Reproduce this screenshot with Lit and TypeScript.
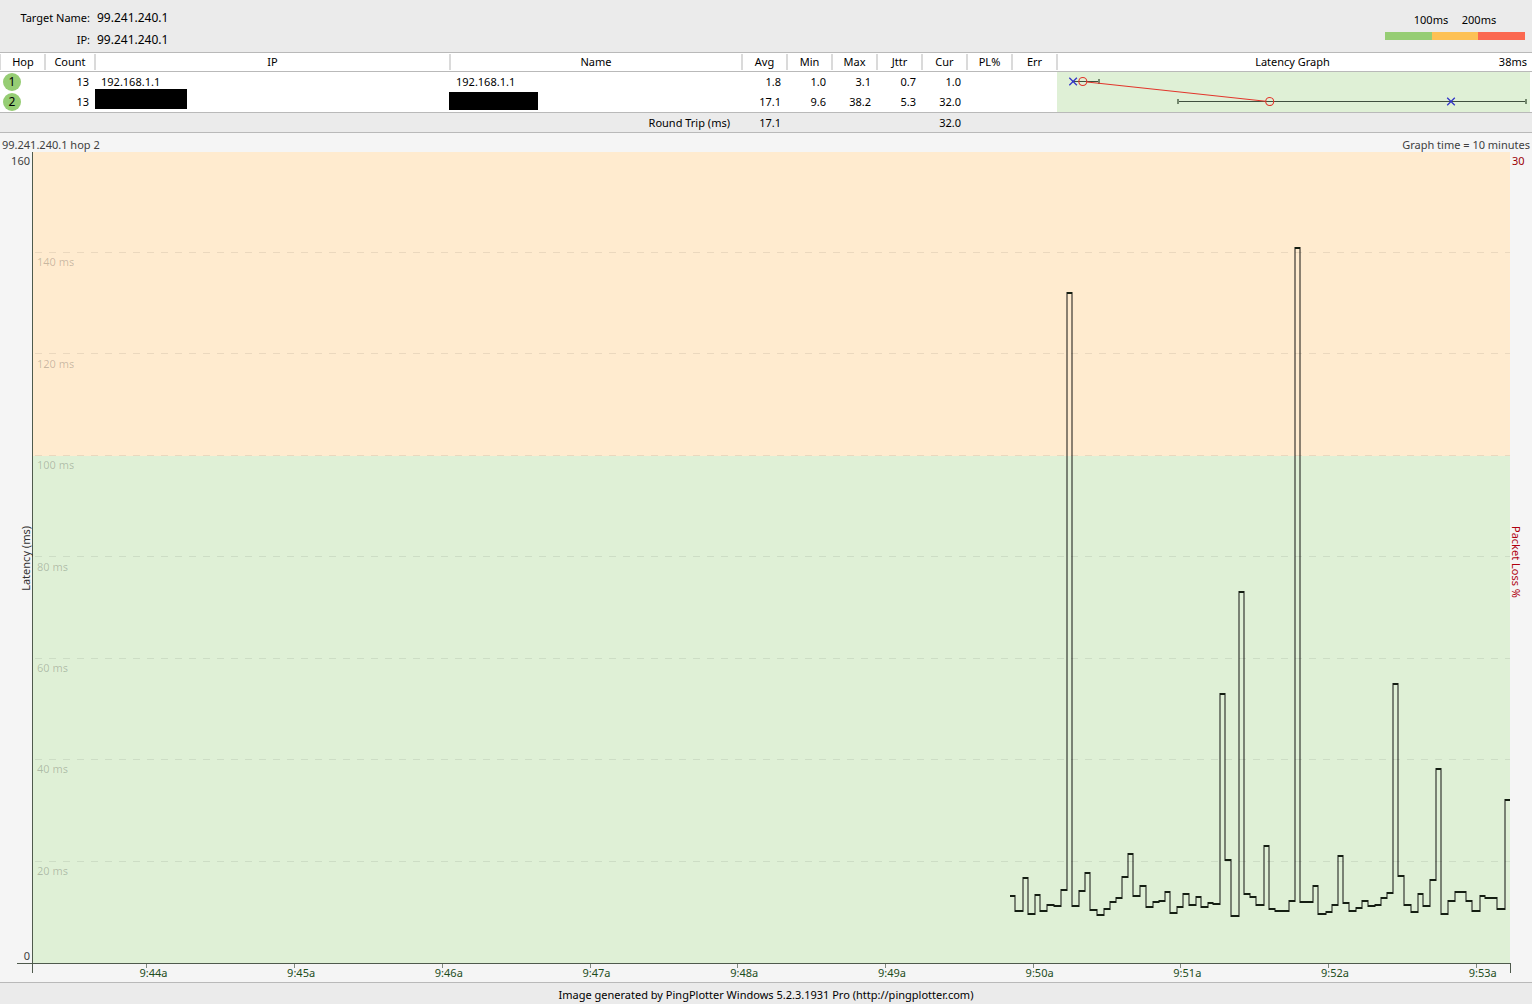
import { LitElement, html, svg, css } from "lit";
import { customElement } from "lit/decorators.js";

interface Hop {
  hop: number;
  count: number;
  ip: string;
  name: string;
  stats: string[];
}

const STAT_COLUMNS = ["Avg", "Min", "Max", "Jttr", "Cur", "PL%", "Err"];

const HOPS: Hop[] = [
  { hop: 1, count: 13, ip: "192.168.1.1", name: "192.168.1.1", stats: ["1.8", "1.0", "3.1", "0.7", "1.0", "", ""] },
  { hop: 2, count: 13, ip: "", name: "", stats: ["17.1", "9.6", "38.2", "5.3", "32.0", "", ""] },
];

const ROUND_TRIP = ["17.1", "", "", "", "32.0", "", ""];

const GRID_LABELS = ["", "140 ms", "120 ms", "100 ms", "80 ms", "60 ms", "40 ms", "20 ms"];

const TIMES = ["9:44a", "9:45a", "9:46a", "9:47a", "9:48a", "9:49a", "9:50a", "9:51a", "9:52a", "9:53a"];

// Each sample is [level, end of the step]; the first step begins at TRACE_START.
const TRACE_START = 1010;
const TRACE: [number, number][] = [
  [896, 1015], [911, 1023], [878, 1028], [914, 1035], [895, 1040], [911, 1047], [905, 1054], [906, 1061],
  [890, 1067], [293, 1072], [906, 1079], [891, 1085], [873, 1090], [910, 1097], [915, 1104], [909, 1110],
  [902, 1116], [898, 1122], [877, 1128], [854, 1133], [896, 1140], [886, 1146], [907, 1153], [902, 1159],
  [901, 1165], [892, 1170], [913, 1177], [907, 1183], [894, 1189], [905, 1196], [897, 1201], [907, 1208],
  [903, 1213], [904, 1220], [694, 1225], [860, 1231], [916, 1239], [592, 1244], [894, 1250], [897, 1256],
  [905, 1264], [846, 1269], [909, 1275], [911, 1289], [901, 1295], [248, 1300], [902, 1313], [886, 1318],
  [914, 1326], [912, 1332], [905, 1338], [856, 1343], [903, 1349], [911, 1356], [908, 1362], [901, 1368],
  [906, 1375], [905, 1381], [898, 1387], [893, 1393], [684, 1398], [876, 1404], [905, 1411], [912, 1418],
  [894, 1423], [906, 1430], [880, 1436], [769, 1441], [914, 1448], [901, 1455], [892, 1466], [901, 1472],
  [911, 1480], [896, 1485], [898, 1497], [909, 1505], [800, 1511],
];

function tracePaths() {
  let levels = "";
  let risers = "";
  let x = TRACE_START;
  TRACE.forEach(([y, end], i) => {
    levels += `M${x} ${y}H${end}`;
    const next = TRACE[i + 1];
    if (next) risers += `M${end} ${Math.min(y, next[0]) - 1}V${Math.max(y, next[0]) + 1}`;
    x = end;
  });
  return { levels, risers };
}

@customElement("hop-latency-graph")
export class HopLatencyGraph extends LitElement {
  static styles = css`
    :host { display: block; height: 40px; background: #dff0d6; }
    svg { display: block; width: 100%; height: 100%; }
    .range { stroke: #40503f; }
    .cap { stroke: #75896f; stroke-width: 2; }
    .route { stroke: #e2352b; fill: none; stroke-width: 1.1; }
    .current { stroke: #3436c8; fill: none; stroke-width: 1.3; }
  `;

  render() {
    return html`
      <svg viewBox="1057 72 473 40" preserveAspectRatio="none" aria-label="Latency per hop">
        <path class="range" d="M1073 81.5H1099M1178 101.5H1526"></path>
        <path class="cap" d="M1099 79V84M1178 99V104M1526 99V104"></path>
        <path class="current" d="M1069.3 77.7l7.6 7.6m0-7.6l-7.6 7.6M1447.2 97.7l7.6 7.6m0-7.6l-7.6 7.6"></path>
        <circle class="route" cx="1082.8" cy="81.5" r="4"></circle>
        <circle class="route" cx="1269.7" cy="101.5" r="4"></circle>
        <path class="route" d="M1087 82L1265.7 101.2"></path>
      </svg>
    `;
  }
}

@customElement("timeline-graph")
export class TimelineGraph extends LitElement {
  static styles = css`
    :host { display: flex; flex-direction: column; color: #404040; }
    .caption { display: flex; justify-content: space-between; height: 19px; padding: 0 2px; line-height: 24px; }
    .chart { flex: 1; display: grid; grid-template-columns: 33px 1fr 22px; grid-template-rows: 1fr 19px; }
    .axis { display: flex; flex-direction: column; justify-content: space-between; line-height: 14px; }
    .left { align-items: flex-end; border-right: 1px solid #4f5a4d; padding-top: 2px; }
    .left .value { padding-right: 2px; }
    .right { align-items: flex-start; padding-top: 2px; color: #9c0006; }
    .right .value { padding-left: 2px; }
    .vertical { writing-mode: vertical-rl; line-height: 12px; color: #303030; }
    .left .vertical { transform: rotate(180deg); }
    .right .vertical { color: #b00010; }
    .balance { height: 7px; }
    .plot { position: relative; }
    .drawing { position: absolute; inset: 0; width: 100%; height: 100%; }
    .levels-text { position: absolute; inset: 0; display: grid; grid-template-rows: repeat(8, 1fr); padding-left: 4px; line-height: 18px; color: rgba(0, 0, 0, 0.22); }
    .warn { fill: #ffebcf; }
    .good { fill: #dff0d6; }
    .guide { stroke: rgba(0, 0, 0, 0.08); stroke-dasharray: 7 7; fill: none; }
    .riser { stroke: rgba(0, 0, 0, 0.46); stroke-width: 2; fill: none; }
    .level { stroke: #141e12; stroke-width: 2; fill: none; }
    .corner { display: flex; justify-content: flex-end; }
    .origin { box-sizing: border-box; width: 16px; height: 10px; border-right: 1px solid #4f5a4d; background: linear-gradient(#4f5a4d, #4f5a4d) top / 100% 1px no-repeat; }
    .terminus { width: 1px; height: 10px; background: #4f5a4d; }
    .times { list-style: none; margin: 0; padding: 0; border-top: 1px solid #4f5a4d; display: grid; grid-template-columns: repeat(10, 1fr); color: #1d4d1c; }
    .time { padding-left: 76.8%; line-height: 10px; }
    .time::before { content: ""; display: block; width: 1px; height: 4px; background: #808a80; }
    .time-text { display: block; margin-left: -7px; }
  `;

  render() {
    const { levels, risers } = tracePaths();
    const guides = [252.5, 353.5, 455.5, 556.5, 658.5, 759.5, 861.5];
    return html`
      <div class="caption"><span>99.241.240.1 hop 2</span><span>Graph time = 10 minutes</span></div>
      <div class="chart">
        <div class="axis left">
          <span class="value">160</span>
          <span class="vertical">Latency (ms)</span>
          <span class="value">0</span>
        </div>
        <div class="plot">
          <svg class="drawing" viewBox="33 152 1477 811" preserveAspectRatio="none" aria-label="Latency over time">
            <rect class="warn" x="33" y="152" width="1477" height="304"></rect>
            <rect class="good" x="33" y="456" width="1477" height="507"></rect>
            ${guides.map((y) => svg`<path class="guide" d="M35 ${y}H1510"></path>`)}
            <path class="riser" d=${risers}></path>
            <path class="level" d=${levels}></path>
          </svg>
          <div class="levels-text">${GRID_LABELS.map((label) => html`<span>${label}</span>`)}</div>
        </div>
        <div class="axis right">
          <span class="value">30</span>
          <span class="vertical">Packet Loss %</span>
          <span class="balance"></span>
        </div>
        <div class="corner"><div class="origin"></div></div>
        <ul class="times">
          ${TIMES.map((t) => html`<li class="time"><span class="time-text">${t}</span></li>`)}
        </ul>
        <div><div class="terminus"></div></div>
      </div>
    `;
  }
}

@customElement("app-root")
export class AppRoot extends LitElement {
  static styles = css`
    :host { display: flex; flex-direction: column; min-height: 100vh; background: #f5f5f5; color: #000; font: 11px/16px "Noto Sans", "Open Sans", sans-serif; }
    .header { display: flex; justify-content: space-between; box-sizing: border-box; height: 53px; padding: 7px 7px 0 18px; background: #ebebeb; border-bottom: 1px solid #b9b9b9; }
    .target { display: grid; grid-template-columns: 72px auto; column-gap: 7px; margin: 0; line-height: 22px; align-content: start; }
    .term { text-align: right; white-space: nowrap; }
    .detail { margin: 0; font-size: 12px; }
    .legend { width: 140px; padding-top: 5px; }
    .limits { display: flex; justify-content: center; text-align: center; padding-bottom: 4px; }
    .limit { width: 48px; }
    .scale { display: grid; grid-template-columns: repeat(3, 1fr); height: 8px; }
    .fast { background: #96cd74; }
    .medium { background: #fdc155; }
    .slow { background: #fb6850; }
    .hops { width: 100%; table-layout: fixed; border-collapse: separate; border-spacing: 0; background: #fff; }
    .col-hop { width: 44px; }
    .col-count { width: 50px; }
    .col-ip { width: 355px; }
    .col-name { width: 292px; }
    .col-stat { width: 45px; }
    th, td { padding: 0; box-sizing: border-box; }
    .head { height: 19px; padding-left: 2px; font-weight: 400; line-height: 18px; border-bottom: 1px solid #b9b9b9; background: linear-gradient(#dadada, #dadada) 0 1px / 2px 16px no-repeat; }
    .head:first-child { background-position: -1px 1px; }
    .graph-head { display: grid; grid-template-columns: 1fr auto 1fr; padding-right: 5px; }
    .maximum { text-align: right; }
    .cell { position: relative; height: 20px; line-height: 20px; }
    .number { text-align: right; padding-right: 5px; }
    .address { padding-left: 7px; }
    .graph-cell { padding: 0 2px 0 1px; }
    .badge { display: block; width: 18px; height: 18px; margin-left: 3px; border-radius: 50%; background: #96cd74; text-align: center; line-height: 18px; font-size: 12px; }
    .redacted { position: absolute; background: #000; }
    .redacted-ip { left: 1px; top: -3px; width: 92px; height: 20px; }
    .redacted-name { left: 0; top: 0; width: 89px; height: 18px; }
    .total { height: 21px; line-height: 19px; background: #ebebeb; border-top: 1px solid #b9b9b9; border-bottom: 1px solid #b9b9b9; font-weight: 400; }
    .total-label { text-align: right; padding-right: 11px; }
    .timeline { flex: 1; }
    .footer { box-sizing: border-box; height: 22px; border-top: 1px solid #b9b9b9; background: #ebebeb; text-align: center; line-height: 23px; }
  `;

  render() {
    return html`
      <header class="header">
        <dl class="target">
          <dt class="term">Target Name:</dt><dd class="detail">99.241.240.1</dd>
          <dt class="term">IP:</dt><dd class="detail">99.241.240.1</dd>
        </dl>
        <div class="legend">
          <div class="limits"><span class="limit">100ms</span><span class="limit">200ms</span></div>
          <div class="scale"><span class="fast"></span><span class="medium"></span><span class="slow"></span></div>
        </div>
      </header>
      <table class="hops">
        <colgroup>
          <col class="col-hop"><col class="col-count"><col class="col-ip"><col class="col-name">
          ${STAT_COLUMNS.map(() => html`<col class="col-stat">`)}
          <col>
        </colgroup>
        <thead>
          <tr>
            <th class="head" scope="col">Hop</th>
            <th class="head" scope="col">Count</th>
            <th class="head" scope="col">IP</th>
            <th class="head" scope="col">Name</th>
            ${STAT_COLUMNS.map((c) => html`<th class="head" scope="col">${c}</th>`)}
            <th class="head" scope="col">
              <div class="graph-head"><span></span><span>Latency Graph</span><span class="maximum">38ms</span></div>
            </th>
          </tr>
        </thead>
        <tbody>
          ${HOPS.map((h, i) => html`
            <tr>
              <td class="cell"><span class="badge">${h.hop}</span></td>
              <td class="cell number">${h.count}</td>
              <td class="cell address">${h.ip || html`<span class="redacted redacted-ip"></span>`}</td>
              <td class="cell address">${h.name || html`<span class="redacted redacted-name"></span>`}</td>
              ${h.stats.map((s) => html`<td class="cell number">${s}</td>`)}
              ${i === 0 ? html`<td class="graph-cell" rowspan="2"><hop-latency-graph></hop-latency-graph></td>` : ""}
            </tr>
          `)}
        </tbody>
        <tfoot>
          <tr>
            <th class="total total-label" scope="row" colspan="4">Round Trip (ms)</th>
            ${ROUND_TRIP.map((s) => html`<td class="total number">${s}</td>`)}
            <td class="total"></td>
          </tr>
        </tfoot>
      </table>
      <timeline-graph class="timeline"></timeline-graph>
      <footer class="footer">Image generated by PingPlotter Windows 5.2.3.1931 Pro (http://pingplotter.com)</footer>
    `;
  }
}
